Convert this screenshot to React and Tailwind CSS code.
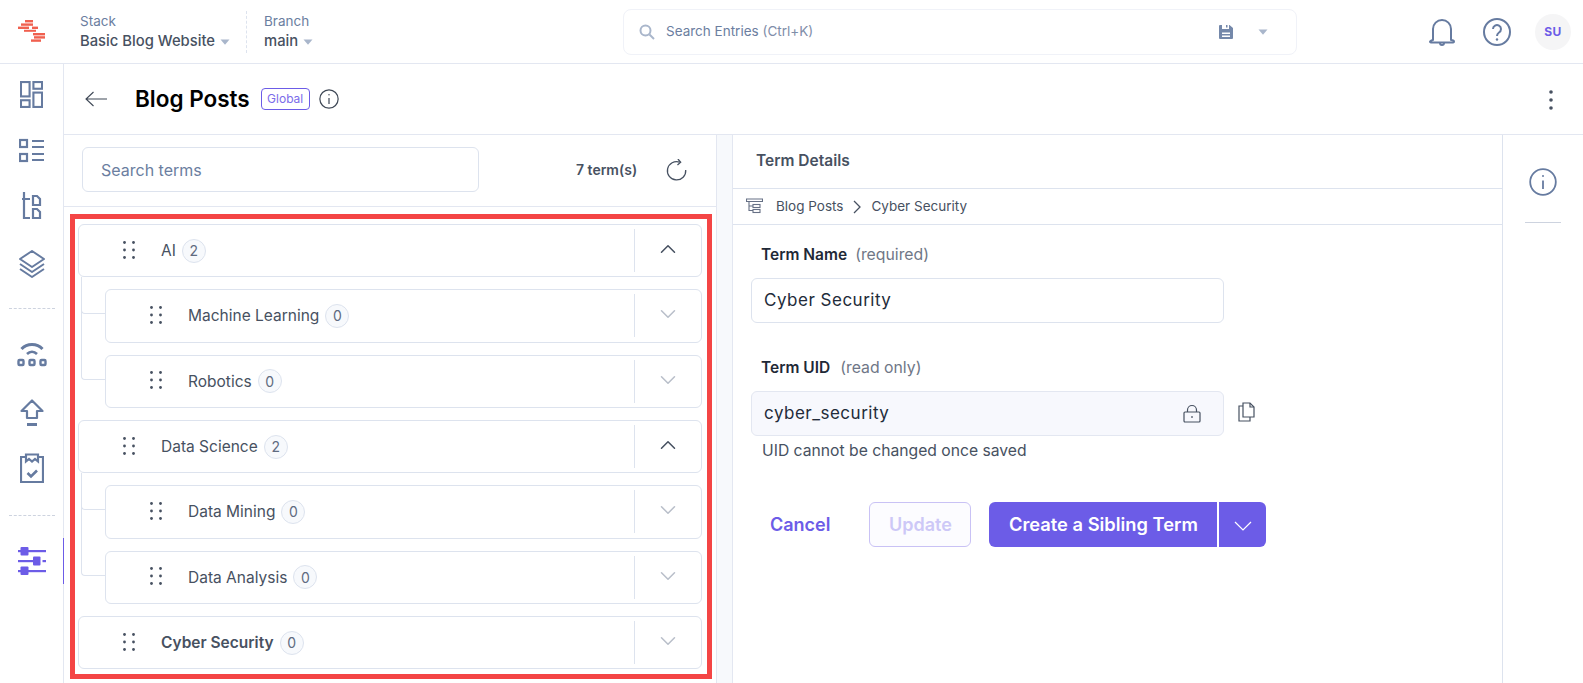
import { ChevronDown, ChevronUp } from 'lucide-react';

const TREE = [
  { name: 'AI', count: 2, open: true, children: [
    { name: 'Machine Learning', count: 0 },
    { name: 'Robotics', count: 0 },
  ] },
  { name: 'Data Science', count: 2, open: true, children: [
    { name: 'Data Mining', count: 0 },
    { name: 'Data Analysis', count: 0 },
  ] },
  { name: 'Cyber Security', count: 0, bold: true, children: [] },
];

function Dots() {
  return (
    <svg width="12" height="18" viewBox="0 0 12 18" fill="#475161">
      {[1.5, 9, 16.5].map((y) => (
        <g key={y}>
          <circle cx="1.5" cy={y} r="1.4" />
          <circle cx="10.5" cy={y} r="1.4" />
        </g>
      ))}
    </svg>
  );
}

function Caret({ className = '' }) {
  return (
    <svg width="10" height="6" viewBox="0 0 10 6" className={className}>
      <path d="M0.5 0.5h9L5 5.8z" fill="#a9b6cb" />
    </svg>
  );
}

function TermRow({ term, child }) {
  return (
    <div className={`h-[53.33px] flex items-center rounded-md border border-[#dde3ee] bg-white ${child ? 'ml-[27px]' : ''}`}>
      <div className="pl-[44px] w-[82px] shrink-0 flex items-center pb-[2px]">
        <Dots />
      </div>
      <div className={`flex-1 flex items-center gap-[6px] text-[15.5px] text-[#475161] ${term.bold ? 'font-semibold' : ''}`}>
        <span>{term.name}</span>
        <span className="w-[24px] h-[24px] rounded-full border border-[#dde3ee] bg-[#f7f9fc] flex items-center justify-center text-[14px] font-normal text-[#5f6b80]">{term.count}</span>
      </div>
      <div className="w-[67px] h-[43px] shrink-0 border-l border-[#dde3ee] flex items-center justify-center pb-[3px]">
        {term.open
          ? <ChevronUp size={26} strokeWidth={1.4} className="text-[#475161]" />
          : <ChevronDown size={26} strokeWidth={1.4} className="text-[#b9bfca]" />}
      </div>
    </div>
  );
}

function TermGroup({ term }) {
  return (
    <div className="flex flex-col gap-[12px]">
      <TermRow term={term} />
      {term.children.length > 0 && (
        <div className="relative flex flex-col gap-[12px]">
          <div className="absolute left-[3px] top-[-12px] w-[24px] h-[37px] border-l border-b border-[#dde3ee] rounded-bl-[4px]" />
          <div className="absolute left-[3px] top-[-12px] w-[24px] h-[103px] border-l border-b border-[#dde3ee] rounded-bl-[4px]" />
          {term.children.map((c) => <TermRow key={c.name} term={c} child />)}
        </div>
      )}
    </div>
  );
}

function Logo() {
  return (
    <svg width="28" height="24" viewBox="0 0 28 24" fill="#f0604f">
      <rect x="7" y="0" width="8" height="2.4" />
      <rect x="3" y="3.4" width="12" height="2.4" />
      <rect x="0" y="6.6" width="11" height="2.4" />
      <rect x="6" y="9.8" width="12" height="2" />
      <rect x="14" y="6.6" width="6" height="2.4" />
      <rect x="15" y="13" width="12" height="2.4" />
      <rect x="16" y="16.2" width="11" height="2.4" />
      <rect x="13" y="19.4" width="10" height="2.4" />
    </svg>
  );
}

const IconDashboard = () => (
  <svg width="23" height="27" viewBox="0 0 24 28" fill="none" stroke="#667ba0" strokeWidth="2.2">
    <rect x="1" y="1" width="9" height="15" /><rect x="14" y="1" width="9" height="7" />
    <rect x="1" y="20" width="9" height="7" /><rect x="14" y="12" width="9" height="15" />
  </svg>
);
const IconList = () => (
  <svg width="26" height="25" viewBox="0 0 26 25" fill="none" stroke="#667ba0" strokeWidth="2.2">
    <rect x="1" y="2" width="7" height="7" /><rect x="1" y="16" width="7" height="7" />
    <path d="M13 3h12M13 9h12M13 16h12M13 22h12" />
  </svg>
);
const IconTaxonomy = () => (
  <svg width="20" height="28" viewBox="0 0 20 28" fill="none" stroke="#667ba0" strokeWidth="2.2">
    <path d="M2 0v26h6M0 7h8" /><path d="M11 4h4l3 3v6h-7z" /><path d="M11 17h4l3 3v6h-7z" />
  </svg>
);
const IconLayers = () => (
  <svg width="26" height="28" viewBox="0 0 26 28" fill="none" stroke="#667ba0" strokeWidth="2" strokeLinejoin="round">
    <path d="M13 1L25 9 13 17 1 9z" /><path d="M1 14l12 8 12-8" /><path d="M1 19l12 8 12-8" />
  </svg>
);
const IconWifi = () => (
  <svg width="30" height="26" viewBox="0 0 30 26" fill="none" stroke="#667ba0" strokeWidth="3">
    <path d="M4.500 8C10 2 20 2 25.500 8" /><path d="M10 13c3-3 7-3 10 0" strokeWidth="2.600" />
    <rect x="1.500" y="19" width="5" height="5" rx="1" strokeWidth="2.400" /><rect x="12.500" y="19" width="5" height="5" rx="1" strokeWidth="2.400" /><rect x="23.500" y="19" width="5" height="5" rx="1" strokeWidth="2.400" />
  </svg>
);
const IconPublish = () => (
  <svg width="24" height="27" viewBox="0 0 24 27" fill="none" stroke="#667ba0" strokeWidth="2.200" strokeLinejoin="round">
    <path d="M12 1.500L22.500 12H17v7H7v-7H1.500z" /><path d="M7 25.500h10" strokeWidth="3" />
  </svg>
);
const IconTask = () => (
  <svg width="24" height="30" viewBox="0 0 24 30" fill="none" stroke="#667ba0" strokeWidth="2.200">
    <path d="M6 4H1v25h22V4h-5" /><path d="M6 1.500h12v7l-3-2.500-3 2.500-3-2.500-3 2.500z" /><path d="M7.500 20l3.500 3.500 6-6" strokeWidth="2.600" />
  </svg>
);
const IconSliders = () => (
  <svg width="28" height="28" viewBox="0 0 28 28" fill="#6c5ce7">
    <rect x="2.500" y="0" width="8" height="8.500" rx="1" /><rect x="0" y="3" width="3" height="2.200" /><rect x="10" y="3" width="18" height="2.200" />
    <rect x="15" y="9.500" width="7.500" height="9" rx="1" /><rect x="0" y="13" width="15" height="2.200" /><rect x="24.500" y="13" width="3.500" height="2.200" />
    <rect x="2.500" y="19.500" width="8" height="8.500" rx="1" /><rect x="0" y="23" width="3" height="2.200" /><rect x="10" y="23" width="18" height="2.200" />
  </svg>
);

function Sidebar() {
  return (
    <aside className="w-[64px] shrink-0 border-r border-[#e3e7f1] flex flex-col items-center pt-[14px] relative">
      <div className="h-[32px] flex items-center"><IconDashboard /></div>
      <div className="h-[32px] mt-[24px] flex items-center"><IconList /></div>
      <div className="h-[32px] mt-[24px] flex items-center"><IconTaxonomy /></div>
      <div className="h-[32px] mt-[26px] flex items-center"><IconLayers /></div>
      <div className="w-[46px] mt-[28px] border-t border-dashed border-[#cdd3df]" />
      <div className="h-[32px] mt-[29px] flex items-center"><IconWifi /></div>
      <div className="h-[32px] mt-[26px] flex items-center"><IconPublish /></div>
      <div className="h-[30px] mt-[25px] flex items-center"><IconTask /></div>
      <div className="w-[46px] mt-[32px] border-t border-dashed border-[#cdd3df]" />
      <div className="h-[46px] w-[64px] mt-[22px] flex items-center justify-center border-r border-[#6c5ce7] mr-[-1px] self-start"><IconSliders /></div>
    </aside>
  );
}

function TopBar() {
  return (
    <header className="h-[64px] shrink-0 border-b border-[#e3e7f1] flex items-center">
      <div className="w-[64px] shrink-0 flex justify-center"><Logo /></div>
      <div className="w-[167px] ml-[16px] shrink-0 h-[42px] border-r border-dashed border-[#dde3ee] leading-[20px]">
        <div className="text-[13.500px] text-[#6b7ea0]">Stack</div>
        <div className="text-[14.800px] font-medium text-[#475161] flex items-center gap-[5px] whitespace-nowrap">Basic Blog Website <Caret className="mt-[3px]" /></div>
      </div>
      <div className="w-[110px] ml-[17px] shrink-0 h-[42px] leading-[20px]">
        <div className="text-[13.500px] text-[#6b7ea0]">Branch</div>
        <div className="text-[14.800px] font-medium text-[#475161] flex items-center gap-[5px]">main <Caret className="mt-[3px]" /></div>
      </div>
      <div className="w-[674px] ml-[249px] h-[46px] shrink-0 rounded-lg border border-[#f0f2f8] flex items-center pl-[15px] pr-[28px]">
        <svg width="16" height="16" viewBox="0 0 16 16" fill="none" stroke="#a9b6cb" strokeWidth="2"><circle cx="6.500" cy="6.500" r="5" /><path d="M10.500 10.500L15 15" /></svg>
        <span className="ml-[11px] text-[13.500px] text-[#6b7ea0] flex-1">Search Entries <span className="text-[#7f8ea9]">(Ctrl+K)</span></span>
        <svg width="14" height="15" viewBox="0 0 14 15" fill="#7488aa"><path fillRule="evenodd" d="M1 1h9.500L14 4v10a1 1 0 01-1 1H1a1 1 0 01-1-1V2a1 1 0 011-1zm2 0v4h7V1H8.500v2.500H7V1zm0 7.500V10h8V8.500zm0 3V13h8v-1.500z" /></svg>
        <Caret className="ml-[25px]" />
      </div>
      <div className="ml-[131px] flex items-center shrink-0">
        <svg width="28" height="28" viewBox="0 0 28 28" fill="none" stroke="#667ba0" strokeWidth="2" strokeLinejoin="round"><path d="M5 22V11a9 9 0 0118 0v11c1 0 3 .500 3 1.500S25 24.500 24 24.500H4c-1 0-2-.500-2-1S4 22 5 22z" /><path d="M12 25a2 2 0 004 0" /></svg>
        <svg className="ml-[27px]" width="28" height="28" viewBox="0 0 28 28" fill="none" stroke="#667ba0" strokeWidth="2"><circle cx="14" cy="14" r="13" /><path d="M10 11a4 4 0 116 3.500c-1.500 1-2 1.500-2 3.500" /><circle cx="14" cy="21.500" r="1.200" fill="#667ba0" stroke="none" /></svg>
        <div className="ml-[24px] w-[36px] h-[36px] rounded-full bg-[#f5f5f6] flex items-center justify-center text-[12px] font-bold tracking-[0.5px] text-[#6c5ce7]">SU</div>
      </div>
    </header>
  );
}

function InfoIcon({ size, color, sw }) {
  return (
    <svg width={size} height={size} viewBox="0 0 28 28" fill="none" stroke={color} strokeWidth={sw}>
      <circle cx="14" cy="14" r="12.800" /><path d="M14 12.500V21" /><circle cx="14" cy="8" r="1" fill={color} stroke="none" />
    </svg>
  );
}

function TreePanel() {
  return (
    <section className="w-[652px] shrink-0 flex flex-col relative">
      <div className="h-[72px] shrink-0 border-b border-[#e3e7f1] flex items-center pl-[18px] pb-[2px]">
        <div className="w-[397px] h-[45px] rounded-md border border-[#dde3ee] flex items-center pl-[18px] text-[16px] text-[#6b7ea0]">Search terms</div>
        <span className="ml-[97px] text-[14px] font-semibold text-[#475161] whitespace-nowrap">7 term(s)</span>
        <svg className="ml-[29px]" width="22" height="22" viewBox="0 0 24 24" fill="none" stroke="#475161" strokeWidth="1.400">
          <path d="M15 3.500A10 10 0 1021.500 12" /><path d="M13 0l3 3.500-3.500 3" />
        </svg>
      </div>
      <div className="flex-1 pt-[17px] pl-[14px] pr-[14px] flex flex-col gap-[12px]">
        {TREE.map((t) => <TermGroup key={t.name} term={t} />)}
      </div>
      <div className="absolute left-[6px] top-[79px] w-[642px] h-[465px] border-[5px] border-[#f44545] pointer-events-none" />
    </section>
  );
}

function DetailPanel() {
  return (
    <section className="flex-1 min-w-0 flex flex-col">
      <div className="h-[54px] shrink-0 border-b border-[#dde3ee] flex items-center pl-[23px] pb-[2px] text-[15.500px] font-semibold text-[#475161]">Term Details</div>
      <div className="h-[36px] shrink-0 border-b border-[#dde3ee] flex items-center pl-[13px] text-[13.500px] text-[#475161]">
        <svg width="17" height="17" viewBox="0 0 17 17" fill="none" stroke="#667085" strokeWidth="1.100"><path d="M0.500 1h16v2.500H.5zM3 3.500v9h4M3 8h4" /><rect x="7" y="6.500" width="7" height="3" /><rect x="7" y="11.500" width="7" height="3" /></svg>
        <span className="ml-[13px]">Blog Posts</span>
        <svg className="mx-[10px]" width="8" height="14" viewBox="0 0 8 14" fill="none" stroke="#475161" strokeWidth="1.300"><path d="M1 1l6 6-6 6" /></svg>
        <span>Cyber Security</span>
      </div>
      <div className="pl-[18px]">
        <div className="pl-[10px] pt-[19px] leading-[22px] text-[15.500px] text-[#1f2937]"><span className="font-semibold">Term Name</span><span className="ml-[8px] text-[#6f7787] text-[15.800px]">(required)</span></div>
        <div className="mt-[12px] w-[473px] h-[45px] rounded-md border border-[#dde3ee] flex items-center pl-[12px] text-[17px] tracking-[0.5px] text-[#222b3a]">Cyber Security</div>
        <div className="pl-[10px] mt-[34px] leading-[22px] text-[15.500px] text-[#1f2937]"><span className="font-semibold">Term UID</span><span className="ml-[10px] text-[#6f7787] text-[15.800px]">(read only)</span></div>
        <div className="mt-[12px] flex items-center">
          <div className="w-[473px] h-[45px] rounded-md border border-[#e3e7f1] bg-[#f7f8fd] flex items-center justify-between pl-[12px] pr-[22px] text-[17px] tracking-[0.5px] text-[#222b3a]">
            cyber_security
            <svg width="18" height="19" viewBox="0 0 18 19" fill="none" stroke="#475161" strokeWidth="1.200"><rect x="1" y="8" width="16" height="10" rx="1" /><path d="M4.500 8V6a4.500 4.500 0 019 0v2M9 12v2" /></svg>
          </div>
          <svg className="ml-[14px] mb-[3px]" width="17" height="20" viewBox="0 0 17 20" fill="none" stroke="#475161" strokeWidth="1.200"><path d="M5 1h7l4 4v10H5z" /><path d="M12 1v4h4M5 4H1v15h11v-4" /></svg>
        </div>
        <div className="pl-[11px] mt-[4px] leading-[22px] text-[15.700px] text-[#475161]">UID cannot be changed once saved</div>
        <div className="mt-[40px] flex items-center h-[45px]">
          <span className="ml-[19px] text-[18px] font-semibold text-[#6c5ce7]">Cancel</span>
          <div className="ml-[39px] w-[102px] h-[45px] rounded-md border border-[#c9c2f5] bg-[#fcfcff] flex items-center justify-center text-[18px] font-semibold text-[#cdc8f7]">Update</div>
          <div className="ml-[18px] w-[228px] h-[45px] rounded-l-md bg-[#6c5ce7] flex items-center justify-center text-[18.300px] font-semibold text-white whitespace-nowrap">Create a Sibling Term</div>
          <div className="ml-[2px] w-[47px] h-[45px] rounded-r-md bg-[#6c5ce7] flex items-center justify-center pt-[3px]">
            <svg width="18" height="10" viewBox="0 0 18 10" fill="none" stroke="#fff" strokeWidth="1.200"><path d="M1 1l8 8 8-8" /></svg>
          </div>
        </div>
      </div>
    </section>
  );
}

export default function App() {
  return (
    <div className="w-[1583px] h-[683px] overflow-hidden bg-white flex flex-col font-['Inter',sans-serif]">
      <TopBar />
      <div className="flex-1 flex min-h-0">
        <Sidebar />
        <main className="flex-1 min-w-0 flex flex-col">
          <div className="h-[71px] shrink-0 border-b border-[#e3e7f1] flex items-center pl-[21px] pr-[30px]">
            <svg width="23" height="16" viewBox="0 0 23 16" fill="none" stroke="#3f4856" strokeWidth="1.100"><path d="M22 8H1M8.500 1L1 8l7.500 7" /></svg>
            <h1 className="ml-[27px] text-[22.500px] font-semibold text-black">Blog Posts</h1>
            <span className="ml-[11px] h-[22px] w-[49px] rounded border border-[#6c5ce7] flex items-center justify-center text-[12px] text-[#7b6cea]">Global</span>
            <span className="ml-[9px] flex"><InfoIcon size={20} color="#3f4856" sw={1.700} /></span>
            <svg className="ml-auto mt-[2px]" width="4" height="20" viewBox="0 0 4 20" fill="#475161"><circle cx="2" cy="2" r="1.800" /><circle cx="2" cy="10" r="1.800" /><circle cx="2" cy="18" r="1.800" /></svg>
          </div>
          <div className="flex-1 flex min-h-0">
            <TreePanel />
            <div className="w-[17px] shrink-0 bg-[#f7f9fc] border-x border-[#e3e7f1]" />
            <DetailPanel />
            <div className="w-[81px] shrink-0 border-l border-[#dde3ee] flex flex-col items-center pt-[33px]">
              <InfoIcon size={28} color="#667ba0" sw={1.800} />
              <div className="mt-[26px] w-[36px] border-t border-[#cdd3df]" />
            </div>
          </div>
        </main>
      </div>
    </div>
  );
}
